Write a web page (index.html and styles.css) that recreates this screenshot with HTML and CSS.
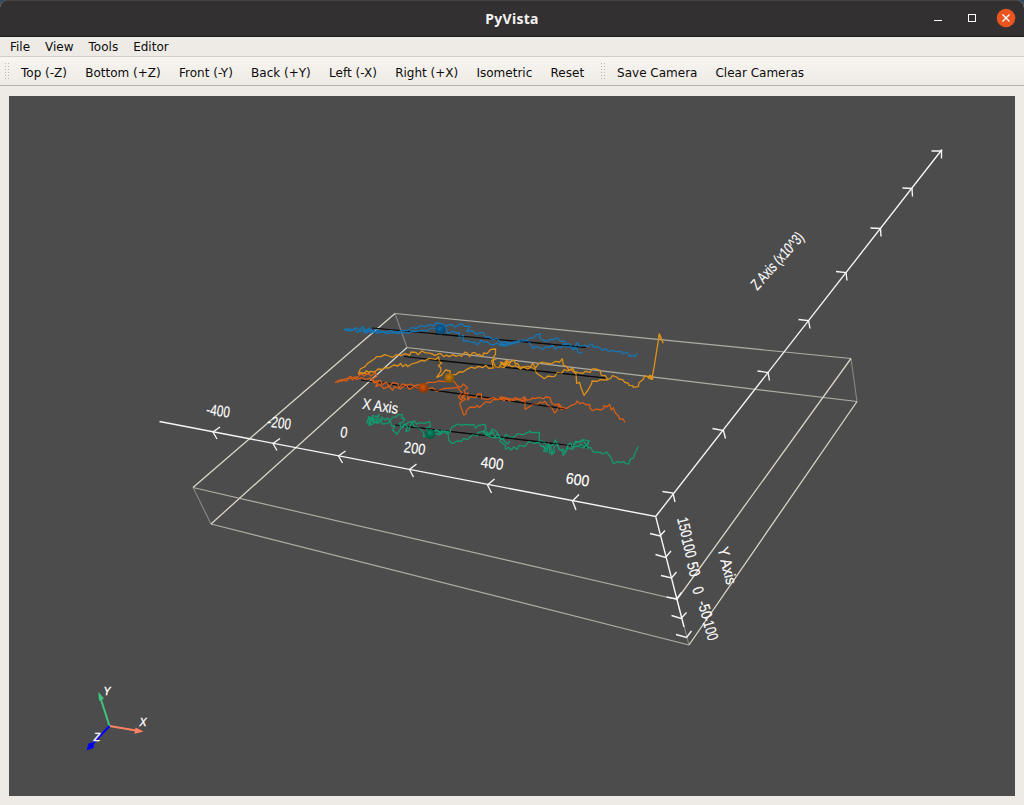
FILE: index.html
```html
<!DOCTYPE html>
<html lang="en">
<head>
<meta charset="utf-8">
<title>PyVista</title>
<link rel="stylesheet" href="styles.css">
</head>
<body>
<div class="window">
  <header class="titlebar">
    <span class="spacer"></span>
    <h1 class="title">PyVista</h1>
    <svg class="controls" width="90" height="36" viewBox="0 0 90 36">
      <path class="ctl" d="M0 20.5h8"/>
      <rect class="ctl" x="34.5" y="14.5" width="7" height="7"/>
      <circle class="close" cx="72" cy="18" r="9.3"/>
      <path class="cross" d="M68.5 14.5l7 7M75.500 14.500l-7 7"/>
    </svg>
  </header>
  <nav class="menubar"><span>File</span><span>View</span><span>Tools</span><span>Editor</span></nav>
  <div class="toolbar">
    <i class="grip"></i>
    <div class="group views"><span>Top (-Z)</span><span>Bottom (+Z)</span><span>Front (-Y)</span><span>Back (+Y)</span><span>Left (-X)</span><span>Right (+X)</span><span>Isometric</span><span>Reset</span></div>
    <i class="grip"></i>
    <div class="group"><span>Save Camera</span><span>Clear Cameras</span></div>
  </div>
  <main class="viewport">
    <svg class="scene" viewBox="9 96 1006 700">
      <defs>
        <radialGradient id="gb" cx=".45" cy=".4"><stop offset="0" stop-color="#0c6cab"/><stop offset="1" stop-color="#064770"/></radialGradient>
        <radialGradient id="gy" cx=".45" cy=".4"><stop offset="0" stop-color="#c8820e"/><stop offset="1" stop-color="#855405"/></radialGradient>
        <radialGradient id="gr" cx=".45" cy=".4"><stop offset="0" stop-color="#d2550a"/><stop offset="1" stop-color="#8e3804"/></radialGradient>
        <radialGradient id="gg" cx=".45" cy=".4"><stop offset="0" stop-color="#078f68"/><stop offset="1" stop-color="#045a42"/></radialGradient>
      </defs>
      <!-- bounding box -->
      <g class="box">
        <path class="edge-x" d="M395 313.500L851 358.500M407 347.500L857 401.500M193 487.500L677 599.500M211 524L689 645"/>
        <path class="edge-y" d="M395 313.500L407 347.500M851 358.500L857 401.500M193 487.500L211 524M677 599.500L689 645"/>
        <path class="edge-z" d="M395 313.500L193 487.500M407 347.500L211 524M851 358.500L677 599.500M857 401.500L689 645"/>
      </g>
      <!-- straight reference lines -->
      <path class="guide" d="M372 328L586 347.500M404 356.500L606 378M361 380L567 409M395 425L587 447.500"/>
      <!-- left part of the blue, yellow and red tracks -->
      <g class="tracks" transform="translate(330 300) scale(.33333)">
        <path class="blue" d="M42 89L58 85 66 92 76 83 88 90 98 80 108 94 120 87 132 97 148 91 162 98 182 92 200 97 217 91 232 92 246 82 258 86 272 77 286 80 300 74 312 77 318 69 334 71 348 79 352 75 366 74 376 82 388 73 396 72 403 79 420 79 410 94 428 92 438 104 446 99 459 97 466 112 475 110 490 119 500 115 510 126 528 126 540 135"/>
        <path class="blue" d="M45 90L62 93 73 87 82 97 96 91 109 99 118 91 130 93 142 100 158 94 170 101 190 98 204 101 222 97 236 100 246 93 262 94 274 90 290 94 306 83 320 88 340 80 349 86 353 100 368 94 379 99 388 97 387 114 395 108 401 107 399 123 415 123 427 128 435 126 439 134 448 130 452 121 463 127 472 125 480 133 490 135 500 129 511 136 518 132 526 137 540 133M98 80L104 98 116 84 123 100 136 88 145 94"/>
        <path class="yellow" d="M85 222L91 207 105 200 113 190 133 177 140 170 153 170 164 164 177 168 188 172 199 164 213 167 225 161 239 166 243 156 257 157 264 164 276 153 285 158 302 160 315 166 330 160 342 170 349 165 357 170 370 164 378 169 388 165 395 169 405 156 413 160 419 170 427 159 435 158 440 164 448 163 457 170 461 159 470 161 483 148 497 147 496 164 490 171 489 184 496 200 507 202 513 192 525 194 540 184"/>
        <path class="yellow" d="M85 222L103 219 115 222 121 214 134 216 144 207 159 208 166 203 177 204 191 195 204 198 212 190 218 200 228 193 233 200 245 192 262 187 274 181 284 183 297 175 318 178 326 170 328 184 335 189 325 197 332 203 333 213 320 232 334 226 347 210 360 213 362 223 377 224 387 216 399 216 411 208 424 201 434 205 446 199 458 203 468 196 476 205 490 204 485 182 500 177M88 216L100 221 110 212 120 220M510 185L520 194 530 180 540 190"/>
        <path class="red" d="M15 248L27 240 35 244 47 236 61 234 68 240 74 231 83 232 91 222 103 228 112 220 124 228 136 217 140 229 127 237 133 245 151 241 157 254 169 247 178 260 188 248 203 251 208 262 219 251 228 257 243 252 251 258 271 253 282 258 294 247 315 247 326 243 350 245 367 240 376 249 381 257 392 262 400 252 413 264 402 271 406 280 394 290 407 297 389 309 394 325 401 345 407 343 410 330 421 321 436 322 440 317 449 322 467 305 481 308 490 298 505 299 512 291 525 293 540 301"/>
        <path class="red" d="M22 248L36 238 50 243 60 229 80 238 95 233 108 239 120 234 133 249 145 245 137 260 150 254 162 266 176 259 188 271 193 260 211 267 228 254 238 268 252 260 271 267 283 271 307 263 320 274 330 270 343 265 369 264 382 262 396 278 385 291 394 300 404 286 414 279 413 300 421 290 437 293 443 282 454 282 455 296 473 298 490 293 502 298 520 294 540 297"/>
      </g>
      <!-- right part of the same tracks -->
      <g class="tracks" transform="translate(500 310) scale(.33333)">
        <path class="blue" d="M0 104L16 108 20 98 32 103 42 95 55 98 67 89 78 93 88 85 101 83 108 75 121 71 119 84 130 91 143 94 150 88 161 89 168 83 176 87 181 94 193 94 196 102 210 102 217 115 226 108 232 97 237 110 254 105 263 110 276 101 280 112 290 110 303 116 308 121 317 116 324 124 337 121 345 125 364 124 368 132 381 126 388 138 397 136 406 139 412 129"/>
        <path class="blue" d="M0 100L14 104 30 97 43 102 54 92 68 95 80 91 89 98 94 106 99 117 107 109 117 112 128 118 138 110 148 113 156 105 167 117 177 110 184 114 190 102 199 111 211 109 221 120 229 112 234 127 247 129"/>
        <path class="yellow" d="M0 158L8 157 12 168 19 155 25 166 33 155 42 150 46 162 53 160 59 171 72 172 82 169 92 170 98 160 106 174 116 161 127 156 137 159 154 162 166 154 179 156 187 146 190 165 200 170 207 181 218 174 223 185 235 188 249 190 256 184 270 187 276 177 289 177 300 181 304 196 316 197 323 209 333 204 337 197 350 201 356 207 368 209 374 217 383 219 388 226 398 227 400 232 415 230 417 218 430 208 434 197 447 203 450 198 456 206 464 161 472 110 478 73 490 100"/>
        <path class="yellow" d="M0 170L12 173 22 162 36 170 48 167 62 177 71 170 83 178 92 171 105 177 109 189 122 198 133 206 144 198 155 200 164 199 172 187 185 190 192 179 203 183 212 178 228 191 230 220 239 217 243 233 252 256 264 240 275 221 276 213 291 214 301 209 322 210M447 195L458 207 447 205 459 199 452 197 455 210M475 91L478 72 485 90"/>
        <path class="red" d="M0 265L12 272 22 265 36 268 47 263 58 270 72 261 80 270 92 269 96 264 106 266 116 262 130 266 137 261 150 262 154 278 165 285 177 282 184 291 199 296 214 286 227 282 231 273 240 281 249 278 259 285 269 283 270 295 278 302 289 297 302 300 311 296 312 287 320 291 329 283 334 300 340 293 346 309 356 319 359 327 369 327 375 337"/>
        <path class="red" d="M0 268L17 265 29 273 44 270 55 266 69 274 75 261 75 298 89 290 97 283 113 283 120 276 128 279 135 274 144 287 155 293 164 309 170 303 177 286 184 298 199 295"/>
      </g>
      <!-- green track -->
      <g class="tracks" transform="translate(340 380) scale(.33333)">
        <path class="green" d="M80 131L85 116 94 120 98 107 110 110 118 103 110 120 98 113 101 127 90 119 87 136 98 132 108 124 115 130 126 120 124 111 135 120 142 114 149 122 158 112 170 110 173 104 187 104 185 114 194 116 190 126 178 130 183 141 195 132 203 142 197 154 207 152 211 136 222 122 230 132 240 128 253 130 269 125 271 140 259 145 263 154 277 158 288 149 298 154 304 162 312 153 330 157 335 142 355 132 365 136 375 133 389 135 402 134 407 144 415 136 435 133 438 147 430 155 438 166 451 158 456 147 469 154 477 167 481 176 489 179 497 163 510 172 521 172 533 161 543 163 551 164 571 153 573 158 598 157 598 182 613 186 624 202 640 194 646 180 653 196 659 210 669 207 675 219 685 193 692 189 698 205 706 184 722 186 728 178 745 183 742 204 752 202 759 216 780 217 790 222 799 216 813 233 820 251 833 245 842 248 850 244 858 251 866 252 871 238 881 233 884 221 895 199"/>
        <path class="green" d="M84 125L92 132 86 110 104 118 93 116 109 129 119 117 127 132 142 130 151 124 155 138 164 138 158 151 171 163 181 147 193 137 204 128 216 125 221 139 236 143 245 150 252 162 250 170 262 168 287 160 299 165 305 151 318 160 324 159 326 180 336 191 352 183 364 184 370 176 382 179 399 163 412 168 415 157 430 154 445 168 457 173 471 172 484 174 479 183 496 196 497 208 506 202 513 210 522 201 530 208 538 196 555 199 566 185 581 190 597 186 603 199 617 201 611 214 621 215 625 190 632 200 635 224 642 202 653 190 656 207 667 213 670 226 679 213 683 203 697 209 705 198 716 199 723 192 733 203 742 192 749 180"/>
        <path class="green" d="M438 153L449 166 458 155 464 172 472 162M490 180L502 192 510 183M609 195L616 210 630 199 628 218 640 222 645 211M700 193L714 185 729 182 739 194 730 204 717 200M283 154L293 151 298 162"/>
      </g>
      <path class="guide faint" d="M410 427L430 429M451 431.500L480 435M500 437L560 444M435 334L465 337M520 341L585 347.500M430 360L475 364.500M525 370L605 378M430 389.500L475 396M510 401L565 409"/>
      <g>
        <circle cx="440.500" cy="329.500" r="5" fill="url(#gb)"/>
        <circle cx="449.300" cy="378" r="5" fill="url(#gy)"/>
        <circle cx="423.300" cy="388" r="5" fill="url(#gr)"/>
        <circle cx="430.300" cy="434" r="5" fill="url(#gg)"/>
      </g>
      <!-- axes and ticks -->
      <g class="axis">
        <path d="M159.500 421.500L655.700 516.500L942 149.500M655.700 516.500L677 599.500L684 627"/>
        <path d="M220 427l-7 5 4 7M280 438.500l-7 5 4 7M345.500 451l-7 5 4 7M416.500 464l-7 5.500 4 7.500M494.500 479l-7 6 4 8M579 494.500l-6.500 6.500 3.500 9"/>
        <path d="M662.500 491.500l10.500 1.500 2 9M712.500 428.500l11 2 2 8M757.500 371l10.500 1.500 1.500 8M798.500 319.500l10 1 1.500 8M836 271.500l10 1 1 8M870.500 228l10 .5 .5 8M902.500 188l9.500 .5 .5 8M931.500 151l10 0 0 7.500"/>
        <path d="M650 533.500l10 2.500 5-5.500M655.500 554.500l10 3 5.500-6.500M661 575.500l10.500 2.500 5-6M666.500 597l10 2 5-6.500M671.500 615.500l9.500 3 5.500-6M676 634.500l10.500 3 5-6.500"/>
      </g>
      <g class="labels">
        <text transform="translate(217.500 416) rotate(7)" textLength="23.500" lengthAdjust="spacingAndGlyphs">-400</text>
        <text transform="translate(278.500 428) rotate(8)" textLength="23.500" lengthAdjust="spacingAndGlyphs">-200</text>
        <text transform="translate(343.300 437.500) rotate(8)" textLength="7" lengthAdjust="spacingAndGlyphs">0</text>
        <text transform="translate(414 453.500) rotate(8)" textLength="21.500" lengthAdjust="spacingAndGlyphs">200</text>
        <text transform="translate(491.500 468.500) rotate(8)" textLength="22.500" lengthAdjust="spacingAndGlyphs">400</text>
        <text transform="translate(577 485) rotate(8)" textLength="23.500" lengthAdjust="spacingAndGlyphs">600</text>
        <text transform="translate(379.500 411.300) rotate(8)" textLength="36" lengthAdjust="spacingAndGlyphs">X Axis</text>
        <text transform="translate(781 264.500) rotate(-48) skewX(-3)" textLength="71" lengthAdjust="spacingAndGlyphs">Z Axis (x10^3)</text>
        <text transform="translate(679.500 528.500) rotate(76)" textLength="20" lengthAdjust="spacingAndGlyphs">150</text>
        <text transform="translate(684 549) rotate(76)" textLength="20" lengthAdjust="spacingAndGlyphs">100</text>
        <text transform="translate(688.500 570.500) rotate(76)" textLength="14.500" lengthAdjust="spacingAndGlyphs">50</text>
        <text transform="translate(693 592) rotate(72)" textLength="7" lengthAdjust="spacingAndGlyphs">0</text>
        <text transform="translate(700 611) rotate(73)" textLength="18" lengthAdjust="spacingAndGlyphs">-50</text>
        <text transform="translate(705 630) rotate(74)" textLength="24" lengthAdjust="spacingAndGlyphs">-100</text>
        <text transform="translate(722 567) rotate(76)" textLength="38" lengthAdjust="spacingAndGlyphs">Y Axis</text>
      </g>
      <!-- orientation marker -->
      <g class="marker">
        <path class="mx" d="M109.500 726L136 730.500"/><path class="mx-head" d="M135.500 727.500L143.500 731.500 134.500 733.700Z"/>
        <path class="my" d="M109.500 726L100.500 698"/><path class="my-head" d="M98.300 691.500L104 698.500 99 701Z"/>
        <path class="mz" d="M109.500 726L92 744.500"/><path class="mz-head" d="M86.500 750.500L88.500 743.500 91.500 742.500 94 745 93.500 748Z"/>
        <text x="107" y="695">Y</text><text x="143" y="726">X</text><text x="97" y="741">Z</text>
      </g>
    </svg>
  </main>
</div>
</body>
</html>
```
FILE: styles.css
```css
* { box-sizing: border-box; }
body { margin: 0; background: #33485a; font: 12px "DejaVu Sans", sans-serif; color: #0c0c0c; }
.window { width: 1024px; height: 805px; display: flex; flex-direction: column; background: #eeebe6; border-radius: 8px 8px 0 0; overflow: hidden; }
.titlebar { height: 37px; flex: none; display: grid; grid-template-columns: 1fr auto 1fr; align-items: center; background: #323030; border-top: 1px solid #454444; border-bottom: 1px solid #1d1c1c; }
.title { margin: 0; font: bold 14px "Noto Sans", sans-serif; letter-spacing: .3px; color: #f4f3f1; padding-bottom: 1px; }
.controls { justify-self: end; margin-top: -1px; }
.ctl { fill: none; stroke: #fff; stroke-width: 1; }
.close { fill: #e95420; }
.cross { stroke: #fff; stroke-width: 1.4; }
.menubar { height: 20px; flex: none; display: flex; align-items: center; gap: 15px; padding: 1px 10px 0; border-bottom: 1px solid #d1cdc7; }
.toolbar { height: 29px; flex: none; display: flex; align-items: center; padding-left: 5px; background: linear-gradient(#f8f5f1, #eeebe5); border-bottom: 1px solid #b5b1ab; white-space: nowrap; }
.grip { width: 4px; height: 17px; flex: none; background: radial-gradient(circle at .5px .5px, #bbb6af .6px, transparent .8px) 0 0 / 3px 3px; }
.group { display: flex; gap: 18px; margin-left: 12px; padding-top: 3px; }
.views { gap: 18.3px; margin-right: 17px; }
.viewport { flex: 1; min-height: 0; margin: 10px 9px 9px; background: #4c4c4c; }
.scene { display: block; width: 1006px; height: 700px; }
.box, .axis, .tracks, .guide { fill: none; }
.edge-x { stroke: #aeada5; stroke-width: 1.15; }
.edge-y { stroke: #858583; stroke-width: 1.15; }
.edge-z { stroke: #d8d5c8; stroke-width: 1.3; }
.guide { stroke: #080808; stroke-width: 1.2; }
.faint { opacity: .6; }
.tracks { stroke-width: 3.9; stroke-linejoin: round; }
.blue { stroke: #1476b7; }
.yellow { stroke: #de9018; }
.red { stroke: #d75d17; }
.green { stroke: #119a70; }
.axis { stroke: #f7f7f7; stroke-width: 1.35; }
.labels text { font: 15.5px "Liberation Sans", sans-serif; fill: #fff; stroke: #fff; stroke-width: .15; text-anchor: middle; }
.marker text { font: italic 10.5px "Liberation Sans", sans-serif; fill: #fff; stroke: #fff; stroke-width: .35; text-anchor: middle; }
.mx, .my, .mz { stroke-width: 2; }
.mx { stroke: #ff8262; } .mx-head { fill: #ff8262; }
.my { stroke: #3fc57c; } .my-head { fill: #3fc57c; }
.mz { stroke: #0000fa; } .mz-head { fill: #0000fa; }
```
